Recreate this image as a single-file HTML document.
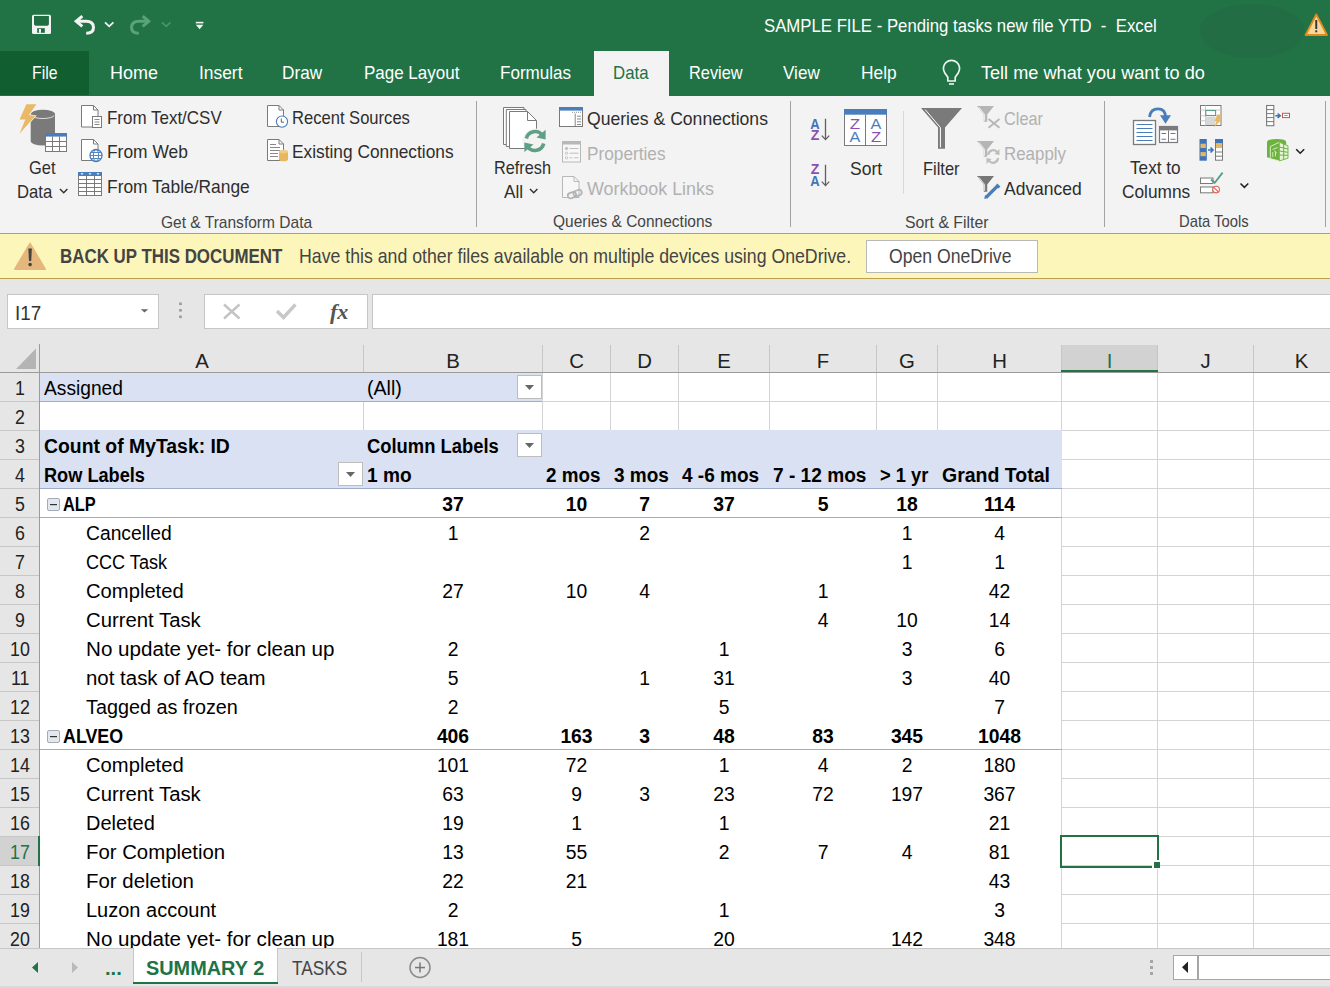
<!DOCTYPE html>
<html><head><meta charset="utf-8"><style>
html,body{margin:0;padding:0;}
body{width:1330px;height:988px;overflow:hidden;position:relative;background:#fff;font-family:"Liberation Sans",sans-serif;}
.t{position:absolute;line-height:1;white-space:pre;transform-origin:0 0;}
.r{position:absolute;}
svg{position:absolute;overflow:visible;}
</style></head><body>
<div class="r" style="left:0px;top:0px;width:1330px;height:96px;background:#217346"></div>
<div class="r" style="left:0px;top:51px;width:89px;height:44px;background:#115e31"></div>
<div class="r" style="left:594px;top:51px;width:75px;height:45px;background:#f3f3f3"></div>
<div class="r" style="left:0px;top:96px;width:1330px;height:138px;background:#f3f3f3"></div>
<div class="r" style="left:0px;top:233px;width:1330px;height:46px;background:#fcf6bb;border-top:1px solid #bba24a;border-bottom:1px solid #bba24a;box-sizing:border-box"></div>
<div class="r" style="left:0px;top:279px;width:1330px;height:65px;background:#e6e6e6"></div>
<div class="r" style="left:7px;top:294px;width:152px;height:35px;background:#fff;border:1px solid #c6c6c6;box-sizing:border-box"></div>
<div class="r" style="left:204px;top:294px;width:164px;height:35px;background:#fff;border:1px solid #c6c6c6;box-sizing:border-box"></div>
<div class="r" style="left:372px;top:294px;width:958px;height:35px;background:#fff;border:1px solid #c6c6c6;border-right:none;box-sizing:border-box"></div>
<div class="r" style="left:0px;top:344px;width:1330px;height:604px;background:#fff"></div>
<div class="r" style="left:0px;top:344px;width:1330px;height:29px;background:#e6e6e6"></div>
<div class="r" style="left:0px;top:344px;width:40px;height:604px;background:#e6e6e6"></div>
<span class="t" style="left:763.50px;top:17.73px;font-size:17.73px;color:#ffffff;transform:scaleX(0.9457);">SAMPLE FILE - Pending tasks new file YTD  -  Excel</span>
<span class="t" style="left:31.50px;top:64.36px;font-size:18.17px;color:#ffffff;transform:scaleX(0.8704);">File</span>
<span class="t" style="left:109.70px;top:64.36px;font-size:18.17px;color:#ffffff;transform:scaleX(0.9904);">Home</span>
<span class="t" style="left:198.50px;top:64.36px;font-size:18.17px;color:#ffffff;transform:scaleX(0.9577);">Insert</span>
<span class="t" style="left:282.40px;top:64.36px;font-size:18.17px;color:#ffffff;transform:scaleX(0.9466);">Draw</span>
<span class="t" style="left:363.60px;top:64.36px;font-size:18.17px;color:#ffffff;transform:scaleX(0.9351);">Page Layout</span>
<span class="t" style="left:499.60px;top:64.36px;font-size:18.17px;color:#ffffff;transform:scaleX(0.9403);">Formulas</span>
<span class="t" style="left:613.00px;top:64.36px;font-size:18.17px;color:#217346;transform:scaleX(0.9249);">Data</span>
<span class="t" style="left:689.00px;top:64.36px;font-size:18.17px;color:#ffffff;transform:scaleX(0.9004);">Review</span>
<span class="t" style="left:783.00px;top:64.36px;font-size:18.17px;color:#ffffff;transform:scaleX(0.9410);">View</span>
<span class="t" style="left:860.50px;top:64.36px;font-size:18.17px;color:#ffffff;transform:scaleX(0.9550);">Help</span>
<span class="t" style="left:980.90px;top:64.36px;font-size:18.17px;color:#ffffff;">Tell me what you want to do</span>
<span class="t" style="left:29.40px;top:159.13px;font-size:18.31px;color:#2e2e2e;transform:scaleX(0.8974);">Get</span>
<span class="t" style="left:17.10px;top:183.13px;font-size:18.31px;color:#2e2e2e;transform:scaleX(0.9098);">Data</span>
<span class="t" style="left:106.80px;top:109.23px;font-size:18.31px;color:#2e2e2e;transform:scaleX(0.9273);">From Text/CSV</span>
<span class="t" style="left:106.80px;top:143.43px;font-size:18.31px;color:#2e2e2e;transform:scaleX(0.9500);">From Web</span>
<span class="t" style="left:106.80px;top:177.63px;font-size:18.31px;color:#2e2e2e;transform:scaleX(0.9507);">From Table/Range</span>
<span class="t" style="left:292.30px;top:109.23px;font-size:18.31px;color:#2e2e2e;transform:scaleX(0.9056);">Recent Sources</span>
<span class="t" style="left:292.30px;top:143.43px;font-size:18.31px;color:#2e2e2e;transform:scaleX(0.9456);">Existing Connections</span>
<span class="t" style="left:161.30px;top:213.62px;font-size:17.15px;color:#444444;transform:scaleX(0.9063);">Get & Transform Data</span>
<span class="t" style="left:493.60px;top:159.13px;font-size:18.31px;color:#2e2e2e;transform:scaleX(0.8886);">Refresh</span>
<span class="t" style="left:503.50px;top:182.73px;font-size:18.31px;color:#2e2e2e;transform:scaleX(0.9375);">All</span>
<span class="t" style="left:587.40px;top:110.23px;font-size:18.31px;color:#2e2e2e;transform:scaleX(0.9617);">Queries & Connections</span>
<span class="t" style="left:587.40px;top:144.73px;font-size:18.31px;color:#b1b1b1;transform:scaleX(0.9417);">Properties</span>
<span class="t" style="left:587.40px;top:180.03px;font-size:18.31px;color:#b1b1b1;transform:scaleX(0.9774);">Workbook Links</span>
<span class="t" style="left:552.60px;top:212.72px;font-size:17.15px;color:#444444;transform:scaleX(0.9038);">Queries & Connections</span>
<span class="t" style="left:849.70px;top:159.63px;font-size:18.31px;color:#2e2e2e;transform:scaleX(0.9582);">Sort</span>
<span class="t" style="left:923.00px;top:159.63px;font-size:18.31px;color:#2e2e2e;transform:scaleX(0.8992);">Filter</span>
<span class="t" style="left:1004.10px;top:110.23px;font-size:18.31px;color:#b1b1b1;transform:scaleX(0.8910);">Clear</span>
<span class="t" style="left:1004.10px;top:145.23px;font-size:18.31px;color:#b1b1b1;transform:scaleX(0.9239);">Reapply</span>
<span class="t" style="left:1004.10px;top:180.13px;font-size:18.31px;color:#2e2e2e;transform:scaleX(0.9552);">Advanced</span>
<span class="t" style="left:905.00px;top:213.52px;font-size:17.15px;color:#444444;transform:scaleX(0.9221);">Sort & Filter</span>
<span class="t" style="left:1130.30px;top:159.23px;font-size:18.31px;color:#2e2e2e;transform:scaleX(0.9382);">Text to</span>
<span class="t" style="left:1121.60px;top:183.13px;font-size:18.31px;color:#2e2e2e;transform:scaleX(0.9453);">Columns</span>
<span class="t" style="left:1178.70px;top:212.62px;font-size:17.15px;color:#444444;transform:scaleX(0.8633);">Data Tools</span>
<div class="r" style="left:476px;top:101px;width:1px;height:126px;background:#a3a3a3"></div>
<div class="r" style="left:790px;top:101px;width:1px;height:126px;background:#a3a3a3"></div>
<div class="r" style="left:1104px;top:101px;width:1px;height:126px;background:#a3a3a3"></div>
<div class="r" style="left:1325px;top:101px;width:1px;height:126px;background:#a3a3a3"></div>
<div class="r" style="left:903px;top:111px;width:1px;height:83px;background:#d8d8d8"></div>
<span class="t" style="left:60.00px;top:247.12px;font-size:19.62px;color:#444444;font-weight:bold;transform:scaleX(0.8623);">BACK UP THIS DOCUMENT</span>
<span class="t" style="left:298.50px;top:247.12px;font-size:19.62px;color:#444444;transform:scaleX(0.9029);">Have this and other files available on multiple devices using OneDrive.</span>
<div class="r" style="left:866px;top:240px;width:172px;height:33px;background:#fff;border:1px solid #b8b8b8;box-sizing:border-box"></div>
<span class="t" style="left:889.00px;top:247.12px;font-size:19.62px;color:#444444;transform:scaleX(0.8986);">Open OneDrive</span>
<span class="t" style="left:15.00px;top:301.89px;font-size:21.08px;color:#333333;transform:scaleX(0.8943);">I17</span>
<div class="r" style="left:40px;top:373px;width:502px;height:29px;background:#d9e1f2"></div>
<div class="r" style="left:40px;top:430px;width:1022px;height:58px;background:#d9e1f2"></div>
<div class="r" style="left:1061px;top:373px;width:1px;height:575px;background:#d4d4d4"></div>
<div class="r" style="left:1157px;top:373px;width:1px;height:575px;background:#d4d4d4"></div>
<div class="r" style="left:1253px;top:373px;width:1px;height:575px;background:#d4d4d4"></div>
<div class="r" style="left:363px;top:373px;width:1px;height:58px;background:#d4d4d4"></div>
<div class="r" style="left:542px;top:373px;width:1px;height:58px;background:#d4d4d4"></div>
<div class="r" style="left:610px;top:373px;width:1px;height:58px;background:#d4d4d4"></div>
<div class="r" style="left:678px;top:373px;width:1px;height:58px;background:#d4d4d4"></div>
<div class="r" style="left:769px;top:373px;width:1px;height:58px;background:#d4d4d4"></div>
<div class="r" style="left:876px;top:373px;width:1px;height:58px;background:#d4d4d4"></div>
<div class="r" style="left:937px;top:373px;width:1px;height:58px;background:#d4d4d4"></div>
<div class="r" style="left:1061px;top:401px;width:269px;height:1px;background:#d4d4d4"></div>
<div class="r" style="left:1061px;top:430px;width:269px;height:1px;background:#d4d4d4"></div>
<div class="r" style="left:1061px;top:459px;width:269px;height:1px;background:#d4d4d4"></div>
<div class="r" style="left:1061px;top:488px;width:269px;height:1px;background:#d4d4d4"></div>
<div class="r" style="left:1061px;top:517px;width:269px;height:1px;background:#d4d4d4"></div>
<div class="r" style="left:1061px;top:546px;width:269px;height:1px;background:#d4d4d4"></div>
<div class="r" style="left:1061px;top:575px;width:269px;height:1px;background:#d4d4d4"></div>
<div class="r" style="left:1061px;top:604px;width:269px;height:1px;background:#d4d4d4"></div>
<div class="r" style="left:1061px;top:633px;width:269px;height:1px;background:#d4d4d4"></div>
<div class="r" style="left:1061px;top:662px;width:269px;height:1px;background:#d4d4d4"></div>
<div class="r" style="left:1061px;top:691px;width:269px;height:1px;background:#d4d4d4"></div>
<div class="r" style="left:1061px;top:720px;width:269px;height:1px;background:#d4d4d4"></div>
<div class="r" style="left:1061px;top:749px;width:269px;height:1px;background:#d4d4d4"></div>
<div class="r" style="left:1061px;top:778px;width:269px;height:1px;background:#d4d4d4"></div>
<div class="r" style="left:1061px;top:807px;width:269px;height:1px;background:#d4d4d4"></div>
<div class="r" style="left:1061px;top:836px;width:269px;height:1px;background:#d4d4d4"></div>
<div class="r" style="left:1061px;top:865px;width:269px;height:1px;background:#d4d4d4"></div>
<div class="r" style="left:1061px;top:894px;width:269px;height:1px;background:#d4d4d4"></div>
<div class="r" style="left:1061px;top:923px;width:269px;height:1px;background:#d4d4d4"></div>
<div class="r" style="left:1061px;top:952px;width:269px;height:1px;background:#d4d4d4"></div>
<div class="r" style="left:40px;top:401px;width:1021px;height:1px;background:#d4d4d4"></div>
<div class="r" style="left:40px;top:373px;width:502px;height:28px;background:#d9e1f2"></div>
<div class="r" style="left:40px;top:430px;width:1022px;height:58px;background:#d9e1f2"></div>
<div class="r" style="left:40px;top:401px;width:502px;height:1px;background:#9fadc9"></div>
<div class="r" style="left:40px;top:488px;width:1022px;height:1px;background:#9fadc9"></div>
<div class="r" style="left:40px;top:517px;width:1022px;height:1px;background:#9fadc9"></div>
<div class="r" style="left:40px;top:749px;width:1022px;height:1px;background:#9fadc9"></div>
<div class="r" style="left:0px;top:344px;width:1330px;height:28px;background:#e6e6e6"></div>
<div class="r" style="left:0px;top:372px;width:1330px;height:1px;background:#9b9b9b"></div>
<div class="r" style="left:39px;top:344px;width:1px;height:604px;background:#9b9b9b"></div>
<div class="r" style="left:363px;top:345px;width:1px;height:27px;background:#c6c6c6"></div>
<div class="r" style="left:542px;top:345px;width:1px;height:27px;background:#c6c6c6"></div>
<div class="r" style="left:610px;top:345px;width:1px;height:27px;background:#c6c6c6"></div>
<div class="r" style="left:678px;top:345px;width:1px;height:27px;background:#c6c6c6"></div>
<div class="r" style="left:769px;top:345px;width:1px;height:27px;background:#c6c6c6"></div>
<div class="r" style="left:876px;top:345px;width:1px;height:27px;background:#c6c6c6"></div>
<div class="r" style="left:937px;top:345px;width:1px;height:27px;background:#c6c6c6"></div>
<div class="r" style="left:1061px;top:345px;width:1px;height:27px;background:#c6c6c6"></div>
<div class="r" style="left:1157px;top:345px;width:1px;height:27px;background:#c6c6c6"></div>
<div class="r" style="left:1253px;top:345px;width:1px;height:27px;background:#c6c6c6"></div>
<div class="r" style="left:1349px;top:345px;width:1px;height:27px;background:#c6c6c6"></div>
<div class="r" style="left:1062px;top:345px;width:95px;height:27px;background:#d2d2d2"></div>
<div class="r" style="left:1061px;top:370px;width:97px;height:2px;background:#217346"></div>
<svg style="left:0;top:344px" width="40" height="29"><polygon points="16,25 36,4.5 36,25" fill="#b4b4b4"/></svg>
<span class="t" style="left:195.21px;top:350.50px;font-size:20.35px;color:#222222;">A</span>
<span class="t" style="left:446.21px;top:350.50px;font-size:20.35px;color:#222222;">B</span>
<span class="t" style="left:569.15px;top:350.50px;font-size:20.35px;color:#222222;">C</span>
<span class="t" style="left:637.15px;top:350.50px;font-size:20.35px;color:#222222;">D</span>
<span class="t" style="left:717.21px;top:350.50px;font-size:20.35px;color:#222222;">E</span>
<span class="t" style="left:816.79px;top:350.50px;font-size:20.35px;color:#222222;">F</span>
<span class="t" style="left:899.09px;top:350.50px;font-size:20.35px;color:#222222;">G</span>
<span class="t" style="left:992.15px;top:350.50px;font-size:20.35px;color:#222222;">H</span>
<span class="t" style="left:1106.68px;top:350.50px;font-size:20.35px;color:#217346;">I</span>
<span class="t" style="left:1200.41px;top:350.50px;font-size:20.35px;color:#222222;">J</span>
<span class="t" style="left:1294.71px;top:350.50px;font-size:20.35px;color:#222222;">K</span>
<div class="r" style="left:0px;top:373px;width:39px;height:575px;background:#e6e6e6"></div>
<div class="r" style="left:0px;top:401px;width:39px;height:1px;background:#c6c6c6"></div>
<div class="r" style="left:0px;top:430px;width:39px;height:1px;background:#c6c6c6"></div>
<div class="r" style="left:0px;top:459px;width:39px;height:1px;background:#c6c6c6"></div>
<div class="r" style="left:0px;top:488px;width:39px;height:1px;background:#c6c6c6"></div>
<div class="r" style="left:0px;top:517px;width:39px;height:1px;background:#c6c6c6"></div>
<div class="r" style="left:0px;top:546px;width:39px;height:1px;background:#c6c6c6"></div>
<div class="r" style="left:0px;top:575px;width:39px;height:1px;background:#c6c6c6"></div>
<div class="r" style="left:0px;top:604px;width:39px;height:1px;background:#c6c6c6"></div>
<div class="r" style="left:0px;top:633px;width:39px;height:1px;background:#c6c6c6"></div>
<div class="r" style="left:0px;top:662px;width:39px;height:1px;background:#c6c6c6"></div>
<div class="r" style="left:0px;top:691px;width:39px;height:1px;background:#c6c6c6"></div>
<div class="r" style="left:0px;top:720px;width:39px;height:1px;background:#c6c6c6"></div>
<div class="r" style="left:0px;top:749px;width:39px;height:1px;background:#c6c6c6"></div>
<div class="r" style="left:0px;top:778px;width:39px;height:1px;background:#c6c6c6"></div>
<div class="r" style="left:0px;top:807px;width:39px;height:1px;background:#c6c6c6"></div>
<div class="r" style="left:0px;top:836px;width:39px;height:1px;background:#c6c6c6"></div>
<div class="r" style="left:0px;top:865px;width:39px;height:1px;background:#c6c6c6"></div>
<div class="r" style="left:0px;top:894px;width:39px;height:1px;background:#c6c6c6"></div>
<div class="r" style="left:0px;top:923px;width:39px;height:1px;background:#c6c6c6"></div>
<div class="r" style="left:0px;top:952px;width:39px;height:1px;background:#c6c6c6"></div>
<div class="r" style="left:0px;top:837px;width:39px;height:28px;background:#d2d2d2"></div>
<div class="r" style="left:38px;top:836px;width:2px;height:30px;background:#217346"></div>
<span class="t" style="left:15.06px;top:379.17px;font-size:19.33px;color:#222222;transform:scaleX(0.9200);">1</span>
<span class="t" style="left:15.06px;top:408.17px;font-size:19.33px;color:#222222;transform:scaleX(0.9200);">2</span>
<span class="t" style="left:15.06px;top:437.17px;font-size:19.33px;color:#222222;transform:scaleX(0.9200);">3</span>
<span class="t" style="left:15.06px;top:466.17px;font-size:19.33px;color:#222222;transform:scaleX(0.9200);">4</span>
<span class="t" style="left:15.06px;top:495.17px;font-size:19.33px;color:#222222;transform:scaleX(0.9200);">5</span>
<span class="t" style="left:15.06px;top:524.17px;font-size:19.33px;color:#222222;transform:scaleX(0.9200);">6</span>
<span class="t" style="left:15.06px;top:553.17px;font-size:19.33px;color:#222222;transform:scaleX(0.9200);">7</span>
<span class="t" style="left:15.06px;top:582.17px;font-size:19.33px;color:#222222;transform:scaleX(0.9200);">8</span>
<span class="t" style="left:15.06px;top:611.17px;font-size:19.33px;color:#222222;transform:scaleX(0.9200);">9</span>
<span class="t" style="left:10.11px;top:640.17px;font-size:19.33px;color:#222222;transform:scaleX(0.9200);">10</span>
<span class="t" style="left:10.77px;top:669.17px;font-size:19.33px;color:#222222;transform:scaleX(0.9200);">11</span>
<span class="t" style="left:10.11px;top:698.17px;font-size:19.33px;color:#222222;transform:scaleX(0.9200);">12</span>
<span class="t" style="left:10.11px;top:727.17px;font-size:19.33px;color:#222222;transform:scaleX(0.9200);">13</span>
<span class="t" style="left:10.11px;top:756.17px;font-size:19.33px;color:#222222;transform:scaleX(0.9200);">14</span>
<span class="t" style="left:10.11px;top:785.17px;font-size:19.33px;color:#222222;transform:scaleX(0.9200);">15</span>
<span class="t" style="left:10.11px;top:814.17px;font-size:19.33px;color:#222222;transform:scaleX(0.9200);">16</span>
<span class="t" style="left:10.11px;top:843.17px;font-size:19.33px;color:#217346;transform:scaleX(0.9200);">17</span>
<span class="t" style="left:10.11px;top:872.17px;font-size:19.33px;color:#222222;transform:scaleX(0.9200);">18</span>
<span class="t" style="left:10.11px;top:901.17px;font-size:19.33px;color:#222222;transform:scaleX(0.9200);">19</span>
<span class="t" style="left:10.11px;top:930.17px;font-size:19.33px;color:#222222;transform:scaleX(0.9200);">20</span>
<div class="r" style="left:1060px;top:835px;width:99px;height:33px;border:2px solid #217346;box-sizing:border-box"></div>
<div class="r" style="left:1152px;top:860px;width:8px;height:9px;background:#fff"></div>
<div class="r" style="left:1154px;top:862px;width:6px;height:6px;background:#217346"></div>
<span class="t" style="left:43.50px;top:379.17px;font-size:19.33px;color:#000000;transform:scaleX(0.9931);">Assigned</span>
<span class="t" style="left:367.20px;top:379.17px;font-size:19.33px;color:#000000;transform:scaleX(1.0128);">(All)</span>
<span class="t" style="left:43.50px;top:437.17px;font-size:19.33px;color:#000000;font-weight:bold;transform:scaleX(1.0025);">Count of MyTask: ID</span>
<span class="t" style="left:367.20px;top:437.17px;font-size:19.33px;color:#000000;font-weight:bold;transform:scaleX(0.9512);">Column Labels</span>
<span class="t" style="left:43.50px;top:466.17px;font-size:19.33px;color:#000000;font-weight:bold;transform:scaleX(0.9401);">Row Labels</span>
<span class="t" style="left:367.20px;top:466.17px;font-size:19.33px;color:#000000;font-weight:bold;transform:scaleX(0.9881);">1 mo</span>
<span class="t" style="left:546.30px;top:466.17px;font-size:19.33px;color:#000000;font-weight:bold;transform:scaleX(0.9737);">2 mos</span>
<span class="t" style="left:613.60px;top:466.17px;font-size:19.33px;color:#000000;font-weight:bold;transform:scaleX(0.9827);">3 mos</span>
<span class="t" style="left:682.20px;top:466.17px;font-size:19.33px;color:#000000;font-weight:bold;transform:scaleX(0.9830);">4 -6 mos</span>
<span class="t" style="left:773.00px;top:466.17px;font-size:19.33px;color:#000000;font-weight:bold;transform:scaleX(0.9886);">7 - 12 mos</span>
<span class="t" style="left:880.20px;top:466.17px;font-size:19.33px;color:#000000;font-weight:bold;transform:scaleX(0.9484);">> 1 yr</span>
<span class="t" style="left:941.50px;top:466.17px;font-size:19.33px;color:#000000;font-weight:bold;transform:scaleX(1.0089);">Grand Total</span>
<span class="t" style="left:63.20px;top:495.17px;font-size:19.33px;color:#000000;font-weight:bold;transform:scaleX(0.8484);">ALP</span>
<span class="t" style="left:63.20px;top:727.17px;font-size:19.33px;color:#000000;font-weight:bold;transform:scaleX(0.9225);">ALVEO</span>
<span class="t" style="left:85.70px;top:524.17px;font-size:19.33px;color:#000000;transform:scaleX(0.9968);">Cancelled</span>
<span class="t" style="left:85.70px;top:553.17px;font-size:19.33px;color:#000000;transform:scaleX(0.9354);">CCC Task</span>
<span class="t" style="left:85.70px;top:582.17px;font-size:19.33px;color:#000000;transform:scaleX(1.0453);">Completed</span>
<span class="t" style="left:85.70px;top:611.17px;font-size:19.33px;color:#000000;transform:scaleX(1.0506);">Current Task</span>
<span class="t" style="left:85.70px;top:640.17px;font-size:19.33px;color:#000000;transform:scaleX(1.0657);">No update yet- for clean up</span>
<span class="t" style="left:85.70px;top:669.17px;font-size:19.33px;color:#000000;transform:scaleX(1.0573);">not task of AO team</span>
<span class="t" style="left:85.70px;top:698.17px;font-size:19.33px;color:#000000;transform:scaleX(1.0241);">Tagged as frozen</span>
<span class="t" style="left:85.70px;top:756.17px;font-size:19.33px;color:#000000;transform:scaleX(1.0453);">Completed</span>
<span class="t" style="left:85.70px;top:785.17px;font-size:19.33px;color:#000000;transform:scaleX(1.0506);">Current Task</span>
<span class="t" style="left:85.70px;top:814.17px;font-size:19.33px;color:#000000;transform:scaleX(1.0323);">Deleted</span>
<span class="t" style="left:85.70px;top:843.17px;font-size:19.33px;color:#000000;transform:scaleX(1.0528);">For Completion</span>
<span class="t" style="left:85.70px;top:872.17px;font-size:19.33px;color:#000000;transform:scaleX(1.0571);">For deletion</span>
<span class="t" style="left:85.70px;top:901.17px;font-size:19.33px;color:#000000;transform:scaleX(1.0346);">Luzon account</span>
<span class="t" style="left:85.70px;top:930.17px;font-size:19.33px;color:#000000;transform:scaleX(1.0657);">No update yet- for clean up</span>
<span class="t" style="left:442.25px;top:495.17px;font-size:19.33px;color:#000000;font-weight:bold;">37</span>
<span class="t" style="left:565.75px;top:495.17px;font-size:19.33px;color:#000000;font-weight:bold;">10</span>
<span class="t" style="left:639.14px;top:495.17px;font-size:19.33px;color:#000000;font-weight:bold;">7</span>
<span class="t" style="left:713.25px;top:495.17px;font-size:19.33px;color:#000000;font-weight:bold;">37</span>
<span class="t" style="left:817.64px;top:495.17px;font-size:19.33px;color:#000000;font-weight:bold;">5</span>
<span class="t" style="left:896.25px;top:495.17px;font-size:19.33px;color:#000000;font-weight:bold;">18</span>
<span class="t" style="left:983.91px;top:495.17px;font-size:19.33px;color:#000000;font-weight:bold;">114</span>
<span class="t" style="left:447.64px;top:524.17px;font-size:19.33px;color:#000000;">1</span>
<span class="t" style="left:639.14px;top:524.17px;font-size:19.33px;color:#000000;">2</span>
<span class="t" style="left:901.64px;top:524.17px;font-size:19.33px;color:#000000;">1</span>
<span class="t" style="left:994.14px;top:524.17px;font-size:19.33px;color:#000000;">4</span>
<span class="t" style="left:901.64px;top:553.17px;font-size:19.33px;color:#000000;">1</span>
<span class="t" style="left:994.14px;top:553.17px;font-size:19.33px;color:#000000;">1</span>
<span class="t" style="left:442.25px;top:582.17px;font-size:19.33px;color:#000000;">27</span>
<span class="t" style="left:565.75px;top:582.17px;font-size:19.33px;color:#000000;">10</span>
<span class="t" style="left:639.14px;top:582.17px;font-size:19.33px;color:#000000;">4</span>
<span class="t" style="left:817.64px;top:582.17px;font-size:19.33px;color:#000000;">1</span>
<span class="t" style="left:988.75px;top:582.17px;font-size:19.33px;color:#000000;">42</span>
<span class="t" style="left:817.64px;top:611.17px;font-size:19.33px;color:#000000;">4</span>
<span class="t" style="left:896.25px;top:611.17px;font-size:19.33px;color:#000000;">10</span>
<span class="t" style="left:988.75px;top:611.17px;font-size:19.33px;color:#000000;">14</span>
<span class="t" style="left:447.64px;top:640.17px;font-size:19.33px;color:#000000;">2</span>
<span class="t" style="left:718.64px;top:640.17px;font-size:19.33px;color:#000000;">1</span>
<span class="t" style="left:901.64px;top:640.17px;font-size:19.33px;color:#000000;">3</span>
<span class="t" style="left:994.14px;top:640.17px;font-size:19.33px;color:#000000;">6</span>
<span class="t" style="left:447.64px;top:669.17px;font-size:19.33px;color:#000000;">5</span>
<span class="t" style="left:639.14px;top:669.17px;font-size:19.33px;color:#000000;">1</span>
<span class="t" style="left:713.25px;top:669.17px;font-size:19.33px;color:#000000;">31</span>
<span class="t" style="left:901.64px;top:669.17px;font-size:19.33px;color:#000000;">3</span>
<span class="t" style="left:988.75px;top:669.17px;font-size:19.33px;color:#000000;">40</span>
<span class="t" style="left:447.64px;top:698.17px;font-size:19.33px;color:#000000;">2</span>
<span class="t" style="left:718.64px;top:698.17px;font-size:19.33px;color:#000000;">5</span>
<span class="t" style="left:994.14px;top:698.17px;font-size:19.33px;color:#000000;">7</span>
<span class="t" style="left:436.88px;top:727.17px;font-size:19.33px;color:#000000;font-weight:bold;">406</span>
<span class="t" style="left:560.38px;top:727.17px;font-size:19.33px;color:#000000;font-weight:bold;">163</span>
<span class="t" style="left:639.14px;top:727.17px;font-size:19.33px;color:#000000;font-weight:bold;">3</span>
<span class="t" style="left:713.25px;top:727.17px;font-size:19.33px;color:#000000;font-weight:bold;">48</span>
<span class="t" style="left:812.25px;top:727.17px;font-size:19.33px;color:#000000;font-weight:bold;">83</span>
<span class="t" style="left:890.88px;top:727.17px;font-size:19.33px;color:#000000;font-weight:bold;">345</span>
<span class="t" style="left:977.99px;top:727.17px;font-size:19.33px;color:#000000;font-weight:bold;">1048</span>
<span class="t" style="left:436.88px;top:756.17px;font-size:19.33px;color:#000000;">101</span>
<span class="t" style="left:565.75px;top:756.17px;font-size:19.33px;color:#000000;">72</span>
<span class="t" style="left:718.64px;top:756.17px;font-size:19.33px;color:#000000;">1</span>
<span class="t" style="left:817.64px;top:756.17px;font-size:19.33px;color:#000000;">4</span>
<span class="t" style="left:901.64px;top:756.17px;font-size:19.33px;color:#000000;">2</span>
<span class="t" style="left:983.38px;top:756.17px;font-size:19.33px;color:#000000;">180</span>
<span class="t" style="left:442.25px;top:785.17px;font-size:19.33px;color:#000000;">63</span>
<span class="t" style="left:571.14px;top:785.17px;font-size:19.33px;color:#000000;">9</span>
<span class="t" style="left:639.14px;top:785.17px;font-size:19.33px;color:#000000;">3</span>
<span class="t" style="left:713.25px;top:785.17px;font-size:19.33px;color:#000000;">23</span>
<span class="t" style="left:812.25px;top:785.17px;font-size:19.33px;color:#000000;">72</span>
<span class="t" style="left:890.88px;top:785.17px;font-size:19.33px;color:#000000;">197</span>
<span class="t" style="left:983.38px;top:785.17px;font-size:19.33px;color:#000000;">367</span>
<span class="t" style="left:442.25px;top:814.17px;font-size:19.33px;color:#000000;">19</span>
<span class="t" style="left:571.14px;top:814.17px;font-size:19.33px;color:#000000;">1</span>
<span class="t" style="left:718.64px;top:814.17px;font-size:19.33px;color:#000000;">1</span>
<span class="t" style="left:988.75px;top:814.17px;font-size:19.33px;color:#000000;">21</span>
<span class="t" style="left:442.25px;top:843.17px;font-size:19.33px;color:#000000;">13</span>
<span class="t" style="left:565.75px;top:843.17px;font-size:19.33px;color:#000000;">55</span>
<span class="t" style="left:718.64px;top:843.17px;font-size:19.33px;color:#000000;">2</span>
<span class="t" style="left:817.64px;top:843.17px;font-size:19.33px;color:#000000;">7</span>
<span class="t" style="left:901.64px;top:843.17px;font-size:19.33px;color:#000000;">4</span>
<span class="t" style="left:988.75px;top:843.17px;font-size:19.33px;color:#000000;">81</span>
<span class="t" style="left:442.25px;top:872.17px;font-size:19.33px;color:#000000;">22</span>
<span class="t" style="left:565.75px;top:872.17px;font-size:19.33px;color:#000000;">21</span>
<span class="t" style="left:988.75px;top:872.17px;font-size:19.33px;color:#000000;">43</span>
<span class="t" style="left:447.64px;top:901.17px;font-size:19.33px;color:#000000;">2</span>
<span class="t" style="left:718.64px;top:901.17px;font-size:19.33px;color:#000000;">1</span>
<span class="t" style="left:994.14px;top:901.17px;font-size:19.33px;color:#000000;">3</span>
<span class="t" style="left:436.88px;top:930.17px;font-size:19.33px;color:#000000;">181</span>
<span class="t" style="left:571.14px;top:930.17px;font-size:19.33px;color:#000000;">5</span>
<span class="t" style="left:713.25px;top:930.17px;font-size:19.33px;color:#000000;">20</span>
<span class="t" style="left:890.88px;top:930.17px;font-size:19.33px;color:#000000;">142</span>
<span class="t" style="left:983.38px;top:930.17px;font-size:19.33px;color:#000000;">348</span>
<svg style="left:47px;top:498px" width="13" height="13"><rect x="0.5" y="0.5" width="12" height="12" rx="1.5" fill="#e3e7ee" stroke="#a4abb8"/><rect x="3" y="6" width="7" height="1.2" fill="#333"/></svg>
<svg style="left:47px;top:730px" width="13" height="13"><rect x="0.5" y="0.5" width="12" height="12" rx="1.5" fill="#e3e7ee" stroke="#a4abb8"/><rect x="3" y="6" width="7" height="1.2" fill="#333"/></svg>
<div class="r" style="left:517px;top:375px;width:25px;height:24px;background:#fff;border:1px solid #bdbdbd;box-sizing:border-box"></div>
<svg style="left:525px;top:385px" width="10" height="6"><polygon points="0,0 9,0 4.5,5" fill="#666"/></svg>
<div class="r" style="left:517px;top:433px;width:25px;height:24px;background:#fff;border:1px solid #bdbdbd;box-sizing:border-box"></div>
<svg style="left:525px;top:443px" width="10" height="6"><polygon points="0,0 9,0 4.5,5" fill="#666"/></svg>
<div class="r" style="left:338px;top:462px;width:25px;height:24px;background:#fff;border:1px solid #bdbdbd;box-sizing:border-box"></div>
<svg style="left:346px;top:472px" width="10" height="6"><polygon points="0,0 9,0 4.5,5" fill="#666"/></svg>
<div class="r" style="left:0px;top:948px;width:1330px;height:40px;background:#e6e6e6"></div>
<div class="r" style="left:0px;top:948px;width:1330px;height:1px;background:#c6c6c6"></div>
<svg style="left:0;top:948px" width="1330" height="40"><polygon points="38,14 38,25 32,19.5" fill="#217346"/><polygon points="72,14 72,25 78,19.5" fill="#b9b9b9"/></svg>
<div class="r" style="left:133px;top:948px;width:145px;height:36px;background:#fff;border-left:1px solid #c6c6c6;border-right:1px solid #c6c6c6;box-sizing:border-box"></div>
<div class="r" style="left:133px;top:982px;width:145px;height:2px;background:#217346"></div>
<span class="t" style="left:105.00px;top:958.72px;font-size:19.62px;color:#217346;font-weight:bold;transform:scaleX(1.0284);">...</span>
<span class="t" style="left:145.60px;top:958.72px;font-size:19.62px;color:#217346;font-weight:bold;transform:scaleX(1.0141);">SUMMARY 2</span>
<span class="t" style="left:291.60px;top:958.72px;font-size:19.62px;color:#444444;transform:scaleX(0.8777);">TASKS</span>
<div class="r" style="left:361px;top:952px;width:1px;height:30px;background:#c6c6c6"></div>
<svg style="left:408px;top:956px" width="24" height="24"><circle cx="12" cy="11.5" r="10" fill="none" stroke="#8a8a8a" stroke-width="1.5"/><rect x="7" y="10.8" width="10" height="1.5" fill="#777"/><rect x="11.25" y="6.5" width="1.5" height="10" fill="#777"/></svg>
<div class="r" style="left:1150px;top:960px;width:3px;height:3px;background:#a6a6a6"></div>
<div class="r" style="left:1150px;top:966px;width:3px;height:3px;background:#a6a6a6"></div>
<div class="r" style="left:1150px;top:972px;width:3px;height:3px;background:#a6a6a6"></div>
<div class="r" style="left:1173px;top:955px;width:157px;height:25px;background:#fff;border:1px solid #a6a6a6;border-right:none;box-sizing:border-box"></div>
<div class="r" style="left:1197px;top:956px;width:2px;height:23px;background:#a6a6a6"></div>
<svg style="left:1181px;top:961px" width="10" height="13"><polygon points="7,0.5 7,12 1,6.25" fill="#222"/></svg>
<svg style="left:0;top:0" width="1330" height="50">
<path d="M32,16.3 Q32,14.8 33.5,14.8 L49.5,14.8 Q51,14.8 51,16.3 L51,32.5 Q51,34 49.5,34 L33.5,34 Q32,34 32,32.5 Z" fill="#f3f3f3"/>
<path d="M34,16.1 L48.9,16.1 L48.9,24.5 L47.6,25.8 L35.3,25.8 L34,24.5 Z" fill="#1f6f43"/>
<rect x="37.2" y="28.2" width="7.6" height="4.6" fill="#1d6a40"/>
<rect x="38.9" y="29" width="2.1" height="3.8" fill="#f3f3f3"/>
<path d="M77,21.3 L86,21.3 Q93.5,21.3 93.5,27.5 Q93.5,33.2 86.2,33.2" fill="none" stroke="#f3f3f3" stroke-width="3"/>
<polyline points="82.3,16.2 76.2,21.3 82.3,26.4" fill="none" stroke="#f3f3f3" stroke-width="3"/>
<polyline points="105,22.3 109.2,26.3 113.4,22.3" fill="none" stroke="#f3f3f3" stroke-width="1.8"/>
<path d="M148,21.3 L139,21.3 Q131.5,21.3 131.5,27.5 Q131.5,33.2 138.8,33.2" fill="none" stroke="#5aa377" stroke-width="3"/>
<polyline points="142.7,16.2 148.8,21.3 142.7,26.4" fill="none" stroke="#5aa377" stroke-width="3"/>
<polyline points="162,22.3 166.2,26.3 170.4,22.3" fill="none" stroke="#4c9469" stroke-width="1.6"/>
<rect x="195.8" y="21.8" width="7.6" height="1.6" fill="#f3f3f3"/>
<polygon points="195.8,24.8 203.4,24.8 199.6,29.2" fill="#f3f3f3"/>
<ellipse cx="1252" cy="31" rx="52" ry="27" fill="#226d43"/>
<path d="M1316.3,14.5 L1327,35 L1305.6,35 Z" fill="#f7d79a" stroke="#e48a1c" stroke-width="1.8" stroke-linejoin="round"/>
<rect x="1315.3" y="20" width="1.9" height="9" fill="#333"/>
<rect x="1315.3" y="30.3" width="1.9" height="2" fill="#333"/>
</svg>
<svg style="left:0;top:0" width="1330" height="240">
<!-- Get Data -->
<path d="M30.7,114.2 L30.7,141 A12.15,4.5 0 0 0 55,141 L55,114.2 Z" fill="#7a7a7a"/>
<ellipse cx="42.85" cy="114.2" rx="12.15" ry="4.5" fill="#7a7a7a"/>
<path d="M31.5,115.5 A11.5,3.6 0 0 0 54.2,115.5" fill="none" stroke="#e0e0e0" stroke-width="1"/>
<polygon points="26.4,104.2 36.4,104.2 28.9,115 35.3,115.9 19.5,133.7 25.3,119.5 19.5,119.5" fill="#e9b965" stroke="#f3f3f3" stroke-width="1.4" stroke-linejoin="miter" paint-order="stroke"/>
<rect x="45.5" y="133.5" width="21" height="18" fill="#fff" stroke="#7a7a7a" stroke-width="1"/>
<rect x="45" y="133" width="22" height="3.6" fill="#4a7ebb"/>
<path d="M52.5,136.5 V151.5 M59.5,136.5 V151.5 M45.5,141.5 H66.5 M45.5,146.5 H66.5" stroke="#7a7a7a" stroke-width="1"/>
<polyline points="60,189 63.7,192.7 67.4,189" fill="none" stroke="#333" stroke-width="1.5"/>
<!-- From Text/CSV -->
<path d="M81.5,105.5 H93.5 L98,110 V127 H81.5 Z" fill="#fff" stroke="#7a7a7a" stroke-width="1"/>
<path d="M93.5,105.5 V110 H98" fill="none" stroke="#7a7a7a" stroke-width="1"/>
<rect x="92.5" y="116.5" width="9" height="11" fill="#fff" stroke="#7a7a7a" stroke-width="1"/>
<path d="M94.5,119.5 H99.5 M94.5,122 H99.5 M94.5,124.5 H99.5" stroke="#7a7a7a" stroke-width="0.9"/>
<!-- From Web -->
<path d="M81.5,139.5 H93.5 L98,144 V160.5 H81.5 Z" fill="#fff" stroke="#7a7a7a" stroke-width="1"/>
<path d="M93.5,139.5 V144 H98" fill="none" stroke="#7a7a7a" stroke-width="1"/>
<circle cx="96" cy="155.5" r="6" fill="#fff" stroke="#4a7ebb" stroke-width="1.3"/>
<ellipse cx="96" cy="155.5" rx="2.6" ry="6" fill="none" stroke="#4a7ebb" stroke-width="1"/>
<path d="M90,155.5 H102 M91,152.5 H101 M91,158.5 H101" stroke="#4a7ebb" stroke-width="0.9"/>
<!-- From Table/Range -->
<rect x="78.5" y="172.5" width="23" height="23" fill="#fff" stroke="#7a7a7a" stroke-width="1"/>
<rect x="78" y="172" width="24" height="4" fill="#4a7ebb"/>
<path d="M86.5,176 V195.5 M94.5,176 V195.5 M78.5,179.5 H101.5 M78.5,183.5 H101.5 M78.5,187.5 H101.5 M78.5,191.5 H101.5" stroke="#7a7a7a" stroke-width="1"/>
<path d="M80.5,173.2 h3 l-1.5,1.8z M88.5,173.2 h3 l-1.5,1.8z M96.5,173.2 h3 l-1.5,1.8z" fill="#fff"/>
<!-- Recent Sources -->
<path d="M267.5,105.5 H279 L283.5,110 V126.5 H267.5 Z" fill="#fff" stroke="#7a7a7a" stroke-width="1"/>
<path d="M279,105.5 V110 H283.5" fill="none" stroke="#7a7a7a" stroke-width="1"/>
<circle cx="282" cy="121.6" r="5.6" fill="#fff" stroke="#4a7ebb" stroke-width="1.1"/>
<polyline points="281.3,118.5 281.3,122.2 284,122.2" fill="none" stroke="#555" stroke-width="0.9"/>
<!-- Existing Connections -->
<path d="M267.5,139.5 H279 L283.5,144 V160.5 H267.5 Z" fill="#fff" stroke="#7a7a7a" stroke-width="1"/>
<path d="M279,139.5 V144 H283.5" fill="none" stroke="#7a7a7a" stroke-width="1"/>
<path d="M270,144.5 H276 M270,147.5 H280 M270,150.5 H280 M270,153.5 H278 M270,156.5 H278" stroke="#7a7a7a" stroke-width="0.9"/>
<path d="M279,151.5 V159.5 A4.5,1.8 0 0 0 288,159.5 V151.5 Z" fill="#e8b860"/>
<ellipse cx="283.5" cy="151.5" rx="4.5" ry="1.8" fill="#f0cc88"/>
<!-- Refresh All -->
<path d="M503.5,107.5 H524 V144.5 H503.5 Z" fill="#fff" stroke="#7a7a7a" stroke-width="1"/>
<path d="M506.3,109.5 H526 V146.5 H506.3 Z" fill="#fff" stroke="#7a7a7a" stroke-width="1"/>
<path d="M509.5,111.5 H527.5 L536.5,120.5 V148.5 H509.5 Z" fill="#fff" stroke="#7a7a7a" stroke-width="1"/>
<path d="M527.5,111.5 V120.5 H536.5" fill="none" stroke="#7a7a7a" stroke-width="1"/>
<circle cx="535" cy="141" r="12.5" fill="#f3f3f3"/>
<path d="M526.3,138.5 A9,9 0 0 1 542.5,135.5" fill="none" stroke="#5e9f86" stroke-width="3.6"/>
<path d="M543.7,143.5 A9,9 0 0 1 527.5,146.5" fill="none" stroke="#5e9f86" stroke-width="3.6"/>
<polygon points="545.6,129.8 545.6,139.5 536.5,137.5" fill="#5e9f86"/>
<polygon points="524.4,152 524.4,142.5 533.5,144.5" fill="#5e9f86"/>
<polyline points="530,189 533.7,192.7 537.4,189" fill="none" stroke="#333" stroke-width="1.5"/>
<!-- Queries & Connections -->
<rect x="559.5" y="107.5" width="23" height="19" fill="#fff" stroke="#7a7a7a" stroke-width="1"/>
<rect x="559" y="107" width="24" height="3.6" fill="#4a7ebb"/>
<path d="M575.2,113.5 V126.5 M577,116.2 H581 M577,119 H581 M577,121.8 H581 M577,124.5 H581" stroke="#7a7a7a" stroke-width="0.9"/>
<path d="M572,112.3 H582" stroke="#7a7a7a" stroke-width="0.8" stroke-dasharray="1,1"/>
<!-- Properties (disabled) -->
<rect x="562.5" y="141.5" width="18" height="20.5" fill="#f7f7f7" stroke="#b8b8b8" stroke-width="1"/>
<rect x="562" y="141" width="19" height="3.5" fill="#b8b8b8"/>
<circle cx="566.5" cy="148.5" r="1.2" fill="#b8b8b8" stroke="#b8b8b8" stroke-width="0.6"/>
<circle cx="566.5" cy="153.2" r="1.2" fill="none" stroke="#b8b8b8" stroke-width="0.8"/>
<circle cx="566.5" cy="157.8" r="1.2" fill="none" stroke="#b8b8b8" stroke-width="0.8"/>
<path d="M569.5,148.5 H578.5 M569.5,153.2 H578.5 M569.5,157.8 H572.5 M574,157.8 H578.5" stroke="#b8b8b8" stroke-width="0.9"/>
<!-- Workbook Links (disabled) -->
<path d="M562.5,176.5 H574 L579,181.5 V197.5 H562.5 Z" fill="#f7f7f7" stroke="#b8b8b8" stroke-width="1"/>
<path d="M574,176.5 V181.5 H579" fill="none" stroke="#b8b8b8" stroke-width="1"/>
<g transform="rotate(-20 575 194)"><rect x="567.5" y="191.3" width="8.5" height="5.4" rx="2.7" fill="#f3f3f3" stroke="#b3b3b3" stroke-width="1.7"/>
<rect x="573.5" y="191.3" width="8.5" height="5.4" rx="2.7" fill="none" stroke="#b3b3b3" stroke-width="1.7"/></g>
</svg>
<svg style="left:0;top:0" width="1330" height="240">
<!-- AZ sort -->
<text x="810.3" y="128.6" font-family="Liberation Sans" font-weight="bold" font-size="14.5" fill="#3f74b8" textLength="9.4" lengthAdjust="spacingAndGlyphs">A</text>
<text x="810.8" y="139.8" font-family="Liberation Sans" font-weight="bold" font-size="14" fill="#8b4fb0" textLength="8.6" lengthAdjust="spacingAndGlyphs">Z</text>
<path d="M825.5,118.7 V139.5 M821.8,135.6 L825.5,139.6 L829.2,135.6" fill="none" stroke="#606060" stroke-width="1.3"/>
<!-- ZA sort -->
<text x="810.8" y="173.8" font-family="Liberation Sans" font-weight="bold" font-size="14" fill="#8b4fb0" textLength="8.6" lengthAdjust="spacingAndGlyphs">Z</text>
<text x="810.3" y="185.9" font-family="Liberation Sans" font-weight="bold" font-size="14.5" fill="#3f74b8" textLength="9.4" lengthAdjust="spacingAndGlyphs">A</text>
<path d="M825.5,164.7 V185.5 M821.8,181.6 L825.5,185.6 L829.2,181.6" fill="none" stroke="#606060" stroke-width="1.3"/>
<!-- Sort big -->
<rect x="844.5" y="109.5" width="42" height="36" fill="#fff" stroke="#7a7a7a" stroke-width="1"/>
<rect x="844" y="109" width="43" height="5.7" fill="#4a7ebb"/>
<path d="M865.5,114.7 V145.5" stroke="#7a7a7a" stroke-width="1"/>
<text x="849.8" y="128.8" font-family="Liberation Sans" font-size="14.8" fill="#8b4fb0" textLength="10.4" lengthAdjust="spacingAndGlyphs">Z</text>
<text x="849.5" y="141.7" font-family="Liberation Sans" font-size="14.8" fill="#4a7ebb" textLength="10.8" lengthAdjust="spacingAndGlyphs">A</text>
<text x="870.6" y="128.8" font-family="Liberation Sans" font-size="14.8" fill="#4a7ebb" textLength="10.8" lengthAdjust="spacingAndGlyphs">A</text>
<text x="871" y="141.7" font-family="Liberation Sans" font-size="14.8" fill="#8b4fb0" textLength="10.2" lengthAdjust="spacingAndGlyphs">Z</text>
<!-- Filter big -->
<polygon points="921,108 962,108 945,127.5 945,148.8 938,148.8 938,127.5" fill="#7a7a7a"/>
<polyline points="925.2,109.6 940.4,127.6 940.4,147.4" fill="none" stroke="#fff" stroke-width="1"/>
<!-- Clear (disabled) -->
<polygon points="977,106 994,106 987.2,114.5 987.2,121.8 983.8,121.8 983.8,114.5" fill="#b5b5b5"/>
<polyline points="978.8,107.2 984.6,114.5 984.6,120.8" fill="none" stroke="#fff" stroke-width="0.8"/>
<path d="M988.5,119 L999.5,127.8 M999.5,119 L988.5,127.8" stroke="#b8b8b8" stroke-width="2"/>
<!-- Reapply (disabled) -->
<polygon points="977,141 994,141 987.2,149.5 987.2,156.8 983.8,156.8 983.8,149.5" fill="#b5b5b5"/>
<polyline points="978.8,142.2 984.6,149.5 984.6,155.8" fill="none" stroke="#fff" stroke-width="0.8"/>
<path d="M988.3,155 A5,5 0 0 1 997.5,152.5" fill="none" stroke="#bdbdbd" stroke-width="2.2"/>
<path d="M998,158 A5,5 0 0 1 988.8,160.5" fill="none" stroke="#bdbdbd" stroke-width="2.2"/>
<polygon points="999.5,149 999.5,155 994.5,154" fill="#bdbdbd"/>
<polygon points="986.5,164 986.5,158 991.5,159" fill="#bdbdbd"/>
<!-- Advanced -->
<polygon points="977,176 994,176 987.2,184.5 987.2,191.8 983.8,191.8 983.8,184.5" fill="#767676"/>
<polyline points="978.8,177.2 984.6,184.5 984.6,190.8" fill="none" stroke="#fff" stroke-width="0.8"/>
<path d="M986,197.5 L997.5,186" stroke="#4a7ebb" stroke-width="3.2"/>
<polygon points="984.2,199 985,195 988,198" fill="#4a7ebb"/>
<path d="M996.5,184.5 L999.5,187.5" stroke="#4a7ebb" stroke-width="2.5"/>
<!-- Text to Columns -->
<rect x="1133.5" y="120.5" width="22" height="24" fill="#fff" stroke="#7a7a7a" stroke-width="1.3"/>
<path d="M1136.5,124.5 H1152.5 M1136.5,128.5 H1152.5 M1136.5,132.5 H1152.5 M1136.5,136.5 H1152.5 M1136.5,140.5 H1152.5" stroke="#4a7ebb" stroke-width="1.1"/>
<rect x="1159.5" y="126.5" width="18" height="16" fill="#fff" stroke="#7a7a7a" stroke-width="1.2"/>
<rect x="1159" y="126" width="19" height="4.4" fill="#7a7a7a"/>
<path d="M1168.5,130.4 V142.5" stroke="#7a7a7a" stroke-width="1"/>
<path d="M1161.5,133.5 H1166 M1170.5,133.5 H1175.5 M1161.5,139.3 H1166 M1170.5,139.3 H1175.5" stroke="#4a7ebb" stroke-width="1.1"/>
<path d="M1149.5,117 Q1150.5,108.8 1158,108.8 Q1165.5,108.8 1165.5,117" fill="none" stroke="#4a7ebb" stroke-width="2.8"/>
<polygon points="1160,115.3 1171,115.3 1165.5,123.8" fill="#4a7ebb"/>
<!-- Flash fill -->
<rect x="1200.5" y="105.5" width="20.5" height="20" fill="#fff" stroke="#7a7a7a" stroke-width="1"/>
<path d="M1205.5,105.5 V125.5 M1200.5,110 H1221 M1200.5,115.8 H1221 M1200.5,120.8 H1221" stroke="#c8c8c8" stroke-width="1"/>
<rect x="1205.5" y="117" width="10" height="8" fill="#d8d8d8"/>
<rect x="1205.8" y="110.5" width="9.8" height="5" fill="#fff" stroke="#5e9f86" stroke-width="1.1"/>
<polygon points="1217.5,114.6 1222.3,114.6 1219.5,119.3 1221.8,119.3 1214.2,127.3 1216.6,121 1214.5,121" fill="#e8b860"/>
<!-- Remove duplicates -->
<rect x="1199.5" y="139" width="7.3" height="21.7" fill="#3f74b8"/>
<rect x="1200.5" y="143.7" width="5.3" height="4.3" fill="#e8b860"/>
<rect x="1200.5" y="152.1" width="5.3" height="4.1" fill="#e8b860"/>
<rect x="1215.5" y="139.5" width="7" height="20.7" fill="#fff" stroke="#7a7a7a" stroke-width="1"/>
<rect x="1215" y="139" width="8" height="4.5" fill="#3f74b8"/>
<rect x="1216" y="143.5" width="6" height="4.5" fill="#e8b860"/>
<path d="M1215.5,152 H1222.5 M1215.5,156.2 H1222.5" stroke="#7a7a7a" stroke-width="1"/>
<path d="M1208,150 H1212.5 M1210.5,147.5 L1213,150 L1210.5,152.5" fill="none" stroke="#3f74b8" stroke-width="1.6"/>
<!-- Data validation -->
<rect x="1200.5" y="178" width="12.5" height="5.5" fill="#fff" stroke="#7a7a7a" stroke-width="1"/>
<rect x="1200.5" y="187" width="12.5" height="5.8" fill="#fff" stroke="#7a7a7a" stroke-width="1"/>
<polyline points="1211,179.5 1214.8,182.8 1222.6,172.6" fill="none" stroke="#4e9e8a" stroke-width="1.8"/>
<circle cx="1216.1" cy="189.6" r="3.3" fill="#fff" stroke="#e0604a" stroke-width="1.1"/>
<path d="M1213.8,187.3 L1218.4,191.9" stroke="#e0604a" stroke-width="1.1"/>
<polyline points="1240.5,183.5 1244.4,187.4 1248.3,183.5" fill="none" stroke="#222" stroke-width="1.5"/>
<!-- Consolidate -->
<rect x="1266.6" y="105.5" width="7.2" height="20.2" fill="#fff" stroke="#7a7a7a" stroke-width="1.1"/>
<path d="M1266.6,109.6 H1273.8 M1266.6,113.6 H1273.8 M1266.6,117.6 H1273.8 M1266.6,121.6 H1273.8" stroke="#7a7a7a" stroke-width="1"/>
<path d="M1275.3,115.7 H1279.5 M1277.6,113.5 L1280.2,115.7 L1277.6,117.9" fill="none" stroke="#3f74b8" stroke-width="1.6"/>
<rect x="1282.5" y="113.3" width="7" height="4.3" fill="#fff" stroke="#c8573f" stroke-width="1"/>
<path d="M1284.3,115.5 H1287.7" stroke="#c8573f" stroke-width="0.8"/>
<!-- Data model (green) -->
<path d="M1267,142.3 Q1267,139 1276.6,139 Q1286.2,139 1286.2,142.3 V145.3 L1279.4,142.3 L1270.3,146.5 V158.3 L1267,157.3 Z" fill="#6cb33e"/>
<polygon points="1270.3,146.5 1279.4,142.3 1279.4,160.9 1270.3,158.6" fill="#6cb33e" stroke="#dff0c8" stroke-width="0.9"/>
<polygon points="1279.4,142.3 1288,145.8 1288,158.2 1279.4,160.9" fill="#e6f3d6" stroke="#6cb33e" stroke-width="0.9"/>
<path d="M1283.7,144 V159.5 M1279.4,147 L1288,149 M1279.4,151 L1288,152.3 M1279.4,155 L1288,155.3" stroke="#6cb33e" stroke-width="1"/>
<path d="M1272.5,149.5 L1277.5,147.5 M1272.8,152 V157 M1275.5,151.5 V156.5 M1274.2,150.8 L1276.8,153" stroke="#dff0c8" stroke-width="0.9" fill="none"/>
<polyline points="1296.2,149.2 1300.2,153.2 1304.2,149.2" fill="none" stroke="#222" stroke-width="1.6"/>
<!-- Warning message bar -->
<path d="M30,243.3 L45.2,269.2 L14.8,269.2 Z" fill="#e6b77c" stroke="#e6b77c" stroke-width="1.6" stroke-linejoin="round"/>
</svg>
<svg style="left:0;top:240px" width="60" height="40">
<path d="M28.3,8.5 H31.9 L31.2,21 H29 Z" fill="#444"/>
<circle cx="30.1" cy="24.6" r="1.8" fill="#444"/>
</svg>
<svg style="left:0;top:280px" width="400" height="64">
<polygon points="140.8,29.2 148.2,29.2 144.5,32.6" fill="#666"/>
<rect x="179.2" y="22.5" width="2.6" height="2.6" fill="#9a9a9a"/>
<rect x="179.2" y="29" width="2.6" height="2.6" fill="#9a9a9a"/>
<rect x="179.2" y="35.5" width="2.6" height="2.6" fill="#9a9a9a"/>
<path d="M224,24.5 L239.5,38.5 M239.5,24.5 L224,38.5" stroke="#c4c4c4" stroke-width="2.4"/>
<polyline points="277,31 283.5,37.5 295.5,24.5" fill="none" stroke="#c8c8c8" stroke-width="3.4"/>
</svg>
<span class="t" style="left:330.00px;top:301.78px;font-size:20.49px;color:#555555;font-weight:bold;font-family:'Liberation Serif';font-style:italic;transform:scaleX(1.0785);">fx</span>
<svg style="left:0;top:0" width="1330" height="96">
<path d="M947.8,81 L947.8,77.3 L944.8,73 A8.1,8.1 0 1 1 958.2,73 L955.2,77.3 L955.2,81 Z" fill="none" stroke="#eef7f0" stroke-width="1.7" stroke-linejoin="round"/>
<path d="M949,84 H954" stroke="#eef7f0" stroke-width="1.6"/>
</svg>
<div class="r" style="left:0px;top:986px;width:1330px;height:2px;background:#d9d9d9"></div>
</body></html>
